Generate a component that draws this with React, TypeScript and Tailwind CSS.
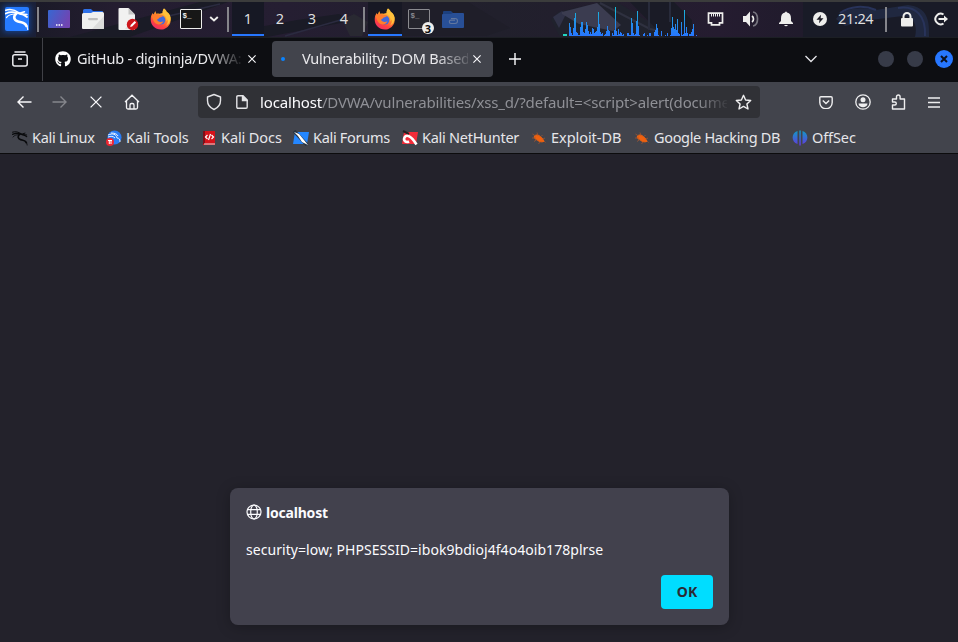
import type { ReactNode } from "react";
import { FaGithub } from "react-icons/fa";

const HEIGHTS = [
  13, 9, 3, 1, 8, 18, 23, 4, 3, 1, 1, 9, 14, 14, 4, 3, 7, 14, 11, 5, 2, 4, 2, 8, 7, 3, 4, 5, 9, 24, 12, 4, 2, 3, 0, 1, 2, 5, 10, 6, 5, 0, 0, 3, 1, 6, 29, 5, 1, 7, 2, 4, 3, 1, 2, 0, 0, 0, 3, 3, 1, 1, 18, 13, 3, 1, 2, 15, 25, 10, 1, 0, 0, 0, 2, 3, 0, 0, 1, 0, 3, 3, 0, 0, 0, 4, 6, 12, 8, 1, 0, 0, 5, 0, 0, 0, 1, 0, 3, 0, 0, 1, 8, 19, 9, 7, 12, 6, 17, 3, 2, 0, 14, 1, 2, 26, 3, 9, 3, 0, 2, 2, 4, 7, 12, 0, 0, 1,
];

function Slot({ w, children }: { w: string; children?: ReactNode }) {
  return <div className={`flex h-full shrink-0 items-center justify-center ${w}`}>{children}</div>;
}

function Divider() {
  return <div className="h-[25px] w-[2px] shrink-0 self-center bg-[#85858b]" />;
}

function Dragon({ size, color }: { size: number; color: string }) {
  return (
    <svg className="shrink-0" width={size} height={size} viewBox="0 0 24 24" fill="none" stroke={color} strokeLinecap="round">
      <path d="M.8 3.200C5 1.800 10 2.800 14.500 6" strokeWidth="1.500" />
      <path d="M.8 6.500C5 4.600 10 5 14 6.500c3 .3 5 .8 8 3.500" strokeWidth="1.800" />
      <path d="M1.500 10.500C4 7.500 7 7 10 7" strokeWidth="1.200" />
      <path d="M14.500 6.300l5-1.600M15.500 7l6.500.500" strokeWidth="1.500" />
      <path d="M11.500 6.500c-3.600 2.600-2.800 6.800 1.500 8 3.500 1 7 .8 8.500 4.500" strokeWidth="2.600" />
      <path d="M20.500 17c1.500 1.500 2 3.500 2.200 5.500" strokeWidth="1.200" />
    </svg>
  );
}

function Firefox() {
  return (
    <svg width="22" height="22" viewBox="0 0 22 22">
      <defs>
        <linearGradient id="fx" x1="0.8" y1="0" x2="0.25" y2="1">
          <stop offset="0" stopColor="#ffe14a" />
          <stop offset="0.4" stopColor="#ff9828" />
          <stop offset="0.75" stopColor="#ff4042" />
          <stop offset="1" stopColor="#ee2d68" />
        </linearGradient>
      </defs>
      <path d="M14 0.5c2 1.6 2.4 3.2 2.7 4.3l1-.2c3 3 3.8 7 2.5 10.300C18.500 19 15 21.500 11 21.500 5 21.500.500 17 .700 11c.100-2.500 1-4.600 2-6l.8 1.800L5.300 3l1 2.800c1.200-.500 2.300-.4 3.100 0l3-.8C12.600 3 13.200 1.400 14 .500z" fill="url(#fx)" />
      <circle cx="10.800" cy="12" r="4.600" fill="#4169dd" />
      <path d="M1.500 8c2-2.300 5.500-2.500 8.800-.8l3 .3c-.3 1.200-2.300 1.600-3.700 2.100-.5 1.400-2 1.300-2.600 2.500 1.500 2.200 4.200 2.400 6.500 1.200-1.300 4-7 4.200-9.500.5C3.300 12.800 2.300 10 1.500 8z" fill="#ff7d2d" />
      <path d="M14 .500c-1.800 2.300-1.600 5 .2 6.600 2.300 2 2.700 4.300 2.200 6.400 1-1 1.300-2 1.200-3.100 1 3-.2 6-2 7.400 4-1.500 5.900-6.500 4.400-10.300-.8-2-2-2.900-3.100-3.600C16.500 2.500 15.300 1.200 14 .500z" fill="#ffc13c" />
    </svg>
  );
}

function TerminalIcon({ dim }: { dim?: boolean }) {
  const c = dim ? "#8b8b90" : "#eeeeec";
  return (
    <svg width="22" height="20" viewBox="0 0 22 20">
      <rect x="0.500" y="0.500" width="21" height="19" rx="0.500" fill={dim ? "#25252d" : "#171717"} stroke={c} />
      <text x="2.500" y="9" fontFamily="Liberation Mono, monospace" fontSize="7.500" fontWeight="700" fill={c}>$_</text>
    </svg>
  );
}

function Panel() {
  return (
    <header className="relative h-[37px] shrink-0 overflow-hidden border-t-2 border-[#3b3c3c] bg-[#1e1c28] text-[#eeeeec]">
      <svg className="absolute inset-0" width="958" height="35" viewBox="0 2 958 35">
        <defs>
          <linearGradient id="wall" x1="0" x2="1">
            <stop offset="0" stopColor="#171924" />
            <stop offset="0.120" stopColor="#241d30" />
            <stop offset="0.300" stopColor="#251e32" />
            <stop offset="0.520" stopColor="#21202c" />
            <stop offset="0.750" stopColor="#251c30" />
            <stop offset="1" stopColor="#171924" />
          </linearGradient>
          <linearGradient id="bars" gradientUnits="userSpaceOnUse" x1="0" y1="7" x2="0" y2="36">
            <stop offset="0" stopColor="#16c3d8" />
            <stop offset="0.500" stopColor="#2290e6" />
            <stop offset="1" stopColor="#2777ff" />
          </linearGradient>
        </defs>
        <rect y="2" width="958" height="35" fill="url(#wall)" />
        <path d="M70 37 200 2h28L130 37zM232 32l65-12 42-6 12 7-84 16h-35z" fill="#1a1b26" />
        <path d="M160 18l60-14M285 36l66-19" stroke="#2b2b40" strokeWidth="1.500" />
        <path d="M342 20l12-6 14 8-6 14h-12z" fill="#292932" />
        <path d="M468 2l42 26-24 8h-86V2z" fill="#1f1e29" />
        <path d="M551 20l7-8 44-10h15l57 35H560z" fill="#20222d" />
        <path d="M553 17l9-6 4 3-7 14z" fill="#303247" />
        <path d="M562 12l35-9 24 22-8 6-34-7-17-10z" fill="#3b3c50" />
        <path d="M600 3l50 26 38 8" stroke="#2f3140" strokeWidth="2" fill="none" />
        <path d="M630 2h44l18 18v17h-28z" fill="#1a1b26" />
        <path d="M649 2v28M670 2v20" stroke="#282b3b" strokeWidth="2" />
        <path d="M803 2h155v35H803z" fill="#191b27" />
        <path d="M836 19c8-12 24-12 40-9l32-5c16 2 22 10 21 32h-14c3-12-2-21-12-21l-33 4-25 6z" fill="#202840" />
        <path d="M840 13c10-7 24-8 36-3M898 8c18-3 28 8 27 28" stroke="#28335a" strokeWidth="2" fill="none" />
        <rect x="0" y="2" width="36" height="35" fill="#2777ff" opacity="0.080" />
        <rect x="563" y="34" width="4" height="2" fill="#22d4c0" />
        {HEIGHTS.map((h, i) => (
          <rect key={i} x={569 + i} y={36 - h} width="1" height={h} fill="url(#bars)" />
        ))}
      </svg>
      <div className="relative flex h-full items-center pb-px">
        <Slot w="w-[37px]">
          <span className="-ml-[3px] flex size-6 items-center justify-center rounded-[2px] bg-[#267bff] shadow-[0_0_5px_2px_#173d80]">
            <Dragon size={24} color="#ffffff" />
          </span>
        </Slot>
        <Divider />
        <Slot w="w-[40px]">
          <svg width="22" height="18">
            <defs><linearGradient id="desk" x2="1" y2="0.400"><stop stopColor="#3767d2" /><stop offset="1" stopColor="#7045b2" /></linearGradient></defs>
            <rect width="22" height="18" rx="1" fill="url(#desk)" />
            <path d="M8 15h1.500M10.500 15h1.500M13 15h1.500" stroke="#fff" strokeWidth="1.500" />
          </svg>
        </Slot>
        <Slot w="w-[28px]">
          <svg width="22" height="20">
            <path d="M1 1.500Q1 0 2.500 0H9l2 2h9.500Q21 2 21 3.500V7H1z" fill="#2e70e8" />
            <path d="M0 5.500Q0 4 1.500 4H9l2-1h9.500Q22 3 22 4.500V19q0 1-1 1H1q-1 0-1-1z" fill="#efefef" />
            <path d="M22 7v12q0 1-1 1H10z" fill="#dcdcdc" />
            <rect x="6" y="9" width="10" height="2.200" rx="1.100" fill="#bebebe" />
          </svg>
        </Slot>
        <Slot w="w-[41px]">
          <svg width="22" height="24">
            <path d="M2.500 1h9L18 7.500V23H2.500q-1 0-1-1V2q0-1 1-1z" fill="#f1f1f1" />
            <path d="M11.500 1 18 7.500h-6.500z" fill="#c7c7c7" />
            <path d="M18 11v11H8z" fill="#dfdfdf" />
            <circle cx="15.500" cy="17.500" r="5.700" fill="#ce171d" />
            <path d="m13.200 20 .5-2 4-4 1.400 1.400-4 4z" fill="white" />
          </svg>
        </Slot>
        <Slot w="w-[26px]"><Firefox /></Slot>
        <Slot w="w-[34px]"><TerminalIcon /></Slot>
        <Slot w="w-[19px]">
          <svg className="mr-[7px] shrink-0" width="10" height="8" fill="none"><path d="m1.200 2 3.800 3.500L8.800 2" stroke="#eeeeec" strokeWidth="1.900" /></svg>
        </Slot>
        <Divider />
        <div className="ml-[3px] flex h-full w-[131px] text-[14.5px] text-[#dedede]">
          {["1", "2", "3", "4"].map((n, i) => (
            <div key={n} className={i === 0 ? "h-[34px] w-8 border-b-2 border-[#2777ff] bg-[#161824] text-center leading-[33px]" : "h-[34px] w-8 text-center leading-[33px]"}>{n}</div>
          ))}
        </div>
        <Divider />
        <div className="ml-[3px] flex h-[34px] w-[34px] items-center justify-center border-b-2 border-[#2777ff] bg-[#171824] pt-[2px]"><Firefox /></div>
        <Slot w="w-[34px]">
          <span className="relative block">
            <TerminalIcon dim />
            <span className="absolute -right-[4px] -bottom-[5px] flex size-3 items-center justify-center rounded-full bg-[#eeeeec] text-[11px] leading-none font-bold text-[#111]">3</span>
          </span>
        </Slot>
        <Slot w="w-[34px]">
          <svg width="22" height="17">
            <path d="M1 1q0-1 1-1h7l2 2h9q1 0 1 1v5H1z" fill="#1c407e" />
            <path d="M0 4q0-1 1-1h8l2-1h10q1 0 1 1v13q0 1-1 1H1q-1 0-1-1z" fill="#284f96" />
            <path d="M9 7.500h4a2 2 0 0 1 0 5H9a1.700 1.700 0 0 1 0-3.400h4" stroke="#62779f" strokeWidth="1.100" fill="none" />
          </svg>
        </Slot>
        <div className="ml-[230px] flex h-full items-center">
          <Slot w="w-[32px]">
            <svg width="18" height="14" fill="none">
              <path d="M1.500 1.200h14v9.600h-3v2h-8v-2h-3z" stroke="#eeeeec" strokeWidth="1.700" />
              <path d="M4.500 2v2.500M6.500 2v2.500M8.500 2v2.500M10.500 2v2.500M12.500 2v2.500" stroke="#eeeeec" />
            </svg>
          </Slot>
          <Slot w="w-[38px]">
            <svg width="18" height="18" fill="none">
              <path d="M1 6h3l4-4.500v15L4 12H1z" fill="#eeeeec" />
              <path d="M10 6c2 1.500 2 4.500 0 6" stroke="#eeeeec" strokeWidth="1.700" />
              <path d="M11 2c6 1 6 13 0 14" stroke="#77757f" strokeWidth="1.700" />
            </svg>
          </Slot>
          <Slot w="w-[32px]">
            <svg width="14" height="16" fill="#eeeeec"><path d="M6 1.500q1-2 2 0c3 .7 4 2.500 4 6V10l2 2v1H0v-1l2-2V7.500c0-3.500 1-5.300 4-6zM5 14h4q-2 2.500-4 0z" /></svg>
          </Slot>
          <Slot w="w-[36px]">
            <svg width="14" height="14"><circle cx="7" cy="7" r="7" fill="#eeeeec" /><path d="M8 2.800 3.500 7.800h3L6 11.200l4.500-5H7.600z" fill="#1a1a24" /></svg>
          </Slot>
          <span className="w-[47px] pb-px text-[14.5px] tracking-[-0.35px] text-[#dedede]">21:24</span>
          <Divider />
          <Slot w="w-[39px]"><svg width="14" height="15"><path d="M3.500 8V4.500a3.500 3.500 0 0 1 7 0V8" fill="none" stroke="#eeeeec" strokeWidth="2" /><rect x="1" y="6" width="12" height="8.500" rx="1" fill="#eeeeec" /></svg></Slot>
          <Slot w="w-[30px]"><svg width="16" height="14" fill="none" stroke="#eeeeec" strokeWidth="2"><path d="M10.500 2.500a5.300 5.300 0 1 0 0 9" /><path d="M5.500 7h7" /><path d="m11 3.500 4 3.500-4 3.500z" fill="#eeeeec" stroke="none" /></svg></Slot>
        </div>
      </div>
    </header>
  );
}

function Cross({ size = 8 }: { size?: number }) {
  return <svg className="shrink-0" width={size} height={size} viewBox="0 0 8 8" fill="none"><path d="m.4.4 7.200 7.200m0-7.200L.4 7.600" stroke="#fbfbfe" strokeWidth={size > 10 ? 0.850 : 1.100} /></svg>;
}

function TabBar() {
  return (
    <div className="flex h-[45px] shrink-0 items-center border-t border-[#1c1f24] bg-[#0d0e12] pb-[2px] text-[14.5px] tracking-[-0.22px] text-[#eaeaed]">
      <div className="flex h-[43px] w-[43px] items-center border-r border-[#404147] pl-3">
        <svg width="16" height="16" fill="none" stroke="#ececef" strokeWidth="1.500"><path d="M3 1h10" strokeLinecap="round" /><rect x="0.800" y="3.800" width="14.400" height="11.200" rx="2" /><path d="M6 8h4" /></svg>
      </div>
      <div className="flex w-[229px] items-center pl-3">
        <FaGithub size={16} color="#fff" className="shrink-0" />
        <span className="ml-[6px] w-[165px] whitespace-nowrap [mask-image:linear-gradient(to_right,black_130px,transparent_167px)]">GitHub - digininja/DVWA:</span>
        <span className="ml-[6px]"><Cross /></span>
      </div>
      <div className="flex h-9 w-[221px] items-center rounded-[4px] bg-[#42444c]">
        <span className="ml-[9px] size-1 shrink-0 rounded-full bg-[#0a84ff]" />
        <span className="ml-[17px] w-[166px] whitespace-nowrap [mask-image:linear-gradient(to_right,black_133px,transparent_173px)]">Vulnerability: DOM Based</span>
        <span className="ml-[5px]"><Cross /></span>
      </div>
      <svg className="ml-[16px]" width="12" height="12"><path d="M6 0v12M0 6h12" stroke="#fbfbfe" strokeWidth="1.400" /></svg>
      <svg className="ml-[284px]" width="12" height="8" fill="none"><path d="m.5 1 5.500 5.500L11.500 1" stroke="#e6e6ea" strokeWidth="1.300" /></svg>
      <span className="ml-[61px] size-4 rounded-full bg-[#373b48]" />
      <span className="ml-[13px] size-4 rounded-full bg-[#373b48]" />
      <span className="ml-3 flex size-[18px] items-center justify-center rounded-full bg-[#2777ff]"><svg width="8" height="8"><path d="m1 1 6 6M7 1 1 7" stroke="#0c1120" strokeWidth="2" /></svg></span>
    </div>
  );
}

function NavBar() {
  return (
    <div className="flex h-10 shrink-0 items-center text-[15px]">
      <svg className="ml-[17px]" width="15" height="12" fill="none" stroke="#f8f8fa" strokeWidth="1.400"><path d="M14.500 6H1M6.500.500 1 6l5.500 5.500" /></svg>
      <svg className="ml-[20px]" width="15" height="12" fill="none" stroke="#85868c" strokeWidth="1.400"><path d="M.500 6H14M8.500.500 14 6l-5.500 5.500" /></svg>
      <span className="ml-[23px]"><Cross size={12} /></span>
      <svg className="ml-[22px]" width="16" height="16" fill="none" stroke="#f3f3f5" strokeWidth="1.300"><path d="M1 8 8 1.200 15 8M2.500 7v6.500q0 1.500 1.500 1.500h8q1.500 0 1.500-1.500V7M6 15v-4q0-1.500 1.500-1.500h1Q10 9.500 10 11v4" /></svg>
      <div className="ml-[58px] flex h-8 w-[562px] items-center rounded-[4px] bg-[#303136]">
        <svg className="ml-2" width="16" height="18" fill="none" stroke="#e4e4e7" strokeWidth="1.400"><path d="M8 1.500 14.500 4v3.500c0 4-3 7.500-6.500 9-3.500-1.500-6.500-5-6.500-9V4z" strokeLinejoin="round" /></svg>
        <svg className="ml-[14px]" width="12" height="14" fill="none" stroke="#e4e4e7" strokeWidth="1.400"><path d="M.800 2Q.800.800 2 .800h5L11.200 5v7q0 1.200-1.200 1.200H2Q.800 13.200.800 12z" /><path d="M6.500 1v4.500H11z" fill="#e4e4e7" /></svg>
        <span className="ml-[12px] w-[467px] whitespace-nowrap tracking-[-0.160px] text-[#8f9096] [mask-image:linear-gradient(to_right,black_438px,transparent_470px)]"><span className="text-[#fbfbfe]">localhost</span>/DVWA/vulnerabilities/xss_d/?default=&lt;script&gt;alert(docume</span>
        <svg className="ml-[8px]" width="17" height="17" viewBox="0 0 17 17" fill="none" stroke="#eeeeef" strokeWidth="1.400"><path d="m8.500 1.300 2.100 4.700 5.100.5-3.800 3.500 1.100 5-4.500-2.600L4 15l1.100-5-3.800-3.500L6.400 6z" strokeLinejoin="round" /></svg>
      </div>
      <svg className="ml-[59px]" width="14" height="13" fill="none" stroke="#eeeeef" strokeWidth="1.400"><path d="M2 .800h10q1.200 0 1.200 1.200v4.500a6.200 6.200 0 0 1-12.400 0V2Q.800.800 2 .800zM3.800 4.500 7 7.500l3.200-3" /></svg>
      <svg className="ml-[21.5px]" width="16" height="16" fill="none"><circle cx="8" cy="8" r="7.200" stroke="#eeeeef" strokeWidth="1.300" /><circle cx="8" cy="5.700" r="2.500" fill="#eeeeef" /><path d="M3.500 9.500h9c0 5-9 5-9 0z" fill="#eeeeef" /></svg>
      <svg className="ml-[20px]" width="16" height="16" fill="none" stroke="#eeeeef" strokeWidth="1.400"><path d="M1.500 15V11h2.300a1.500 1.500 0 0 0 0-3H1.500V5h4V2.800a1.800 1.800 0 0 1 3.600 0V5h4.400v10z" strokeLinejoin="round" /></svg>
      <svg className="ml-[21px]" width="12" height="11"><path d="M0 1h12M0 5.500h12M0 10h12" stroke="#eeeeef" strokeWidth="1.300" /></svg>
    </div>
  );
}

function Bug() {
  return <svg width="16" height="16"><path d="M3.500 6c2.500-2.600 7 0 9.500 5.200-2.500 1.600-6 0-7.500-1.900C3.800 9.300 2.800 7.700 3.500 6z" fill="#ef610f" stroke="#ef610f" /><path d="M1.500 4l3 2M6 2.500l1 3M1 8h4M3 11.500l3-2M9 12l-1.500 2M10 6.500l1.500-1.500M12 9l2-1M13 11l1.500 1.500" stroke="#a9582f" strokeWidth="0.700" /></svg>;
}

function ForumIcon({ red }: { red?: boolean }) {
  return <svg width="16" height="16" fill="none"><path d="M2 2h14l-2 12H0z" fill={red ? "#f32c39" : "#2487ff"} />{red ? <><path d="m1 1 6 3" stroke="#222" strokeWidth="2" /><path d="M7 11.500c-3 1.500-6-1-4.500-4C4.500 4 9 5.500 14.500 14.500" stroke="white" strokeWidth="2.600" /></> : <><path d="m1 1 13 14" stroke="#263443" strokeWidth="3.500" /><path d="m1 2 5 2 5 6 4 5-6-3-4-6z" fill="white" /></>}</svg>;
}

const BOOKMARKS: { label: string; w: string; icon: ReactNode }[] = [
  { label: "Kali Linux", w: "w-[94px] tracking-[-0.27px]", icon: <Dragon size={16} color="#08090b" /> },
  { label: "Kali Tools", w: "w-[95px] tracking-[-0.1px]", icon: <svg width="16" height="16"><circle cx="8.500" cy="7.500" r="7" fill="#297cf5" /><path d="M2 5c5-2 8-1 9 3 2 0 3 1 3 4M5 3c4 0 6 1 7 3M2 7c3-1 5-1 7 1" stroke="#e8f2ff" fill="none" /><circle cx="4" cy="12" r="4" fill="#ed2631" /><path d="M2 10.500h4M3.300 10.500V14M5 10.500V14" stroke="white" /></svg> },
  { label: "Kali Docs", w: "w-[92px] tracking-[-0.1px]", icon: <svg width="16" height="16"><path d="M2 1h12v14H2z" fill="#d5131b" /><path d="M2 1h2v13H2z" fill="#7f0e18" /><path d="M3 14h11" stroke="#ddd" /><path d="m6.500 5-2 2 2 2m4-4 2 2-2 2m-1-5-2 6" stroke="white" fill="none" strokeWidth="1.200" /></svg> },
  { label: "Kali Forums", w: "w-[109px] tracking-[-0.3px]", icon: <ForumIcon /> },
  { label: "Kali NetHunter", w: "w-[129px] tracking-[-0.27px]", icon: <ForumIcon red /> },
  { label: "Exploit-DB", w: "w-[103px] tracking-[-0.05px]", icon: <Bug /> },
  { label: "Google Hacking DB", w: "w-[158px] tracking-[-0.33px]", icon: <Bug /> },
  { label: "OffSec", w: "w-[70px] tracking-[-0.1px]", icon: <svg width="16" height="16"><defs><linearGradient id="off" x2="0" y2="1"><stop stopColor="#109bc5" /><stop offset="1" stopColor="#6438df" /></linearGradient></defs><path d="M5.500 1v13C-1 12-1 3 5.500 1zm5 0v13C17 12 17 3 10.500 1zM7.300.500h1.500v15H7.300z" fill="url(#off)" /></svg> },
];

function Bookmarks() {
  return (
    <div className="flex h-[31px] shrink-0 items-center pl-3 text-[14.5px] text-[#e6e6ea]">
      {BOOKMARKS.map((b) => (
        <div key={b.label} className={`flex shrink-0 items-center gap-1 whitespace-nowrap ${b.w}`}>{b.icon}<span>{b.label}</span></div>
      ))}
    </div>
  );
}

export default function App() {
  return (
    <div className="flex h-[642px] w-[958px] flex-col overflow-hidden bg-[#23222b] font-['Noto_Sans',sans-serif]">
      <Panel />
      <TabBar />
      <div className="flex h-[72px] shrink-0 flex-col border-b border-[#0c0c0d] bg-[#42444c]"><NavBar /><Bookmarks /></div>
      <main className="flex flex-1 flex-col items-center justify-end pb-[17px]">
        <section className="ml-px flex h-[137px] w-[499px] flex-col rounded-lg bg-[#42414d] px-4 pt-[13px] text-[14px] text-[#fbfbfe] shadow-[0_2px_14px_rgba(0,0,0,0.25)]">
          <div className="flex h-[22px] items-center gap-1 font-bold tracking-[-0.2px]">
            <svg width="16" height="16" fill="none" stroke="#fbfbfe" strokeWidth="1.200"><circle cx="8" cy="8" r="7" /><ellipse cx="8" cy="8" rx="3.300" ry="7" /><path d="M1.500 5.700h13M1.500 10.300h13" /></svg>
            <span>localhost</span>
          </div>
          <p className="mt-[16px] h-[22px] leading-[22px] tracking-[0.05px] whitespace-nowrap">security=low; PHPSESSID=ibok9bdioj4f4o4oib178plrse</p>
          <button className="mt-[14px] h-[34px] w-[52px] self-end rounded-[4px] bg-[#00ddff] pb-[2px] font-bold text-[#2b2a33]">OK</button>
        </section>
      </main>
    </div>
  );
}
